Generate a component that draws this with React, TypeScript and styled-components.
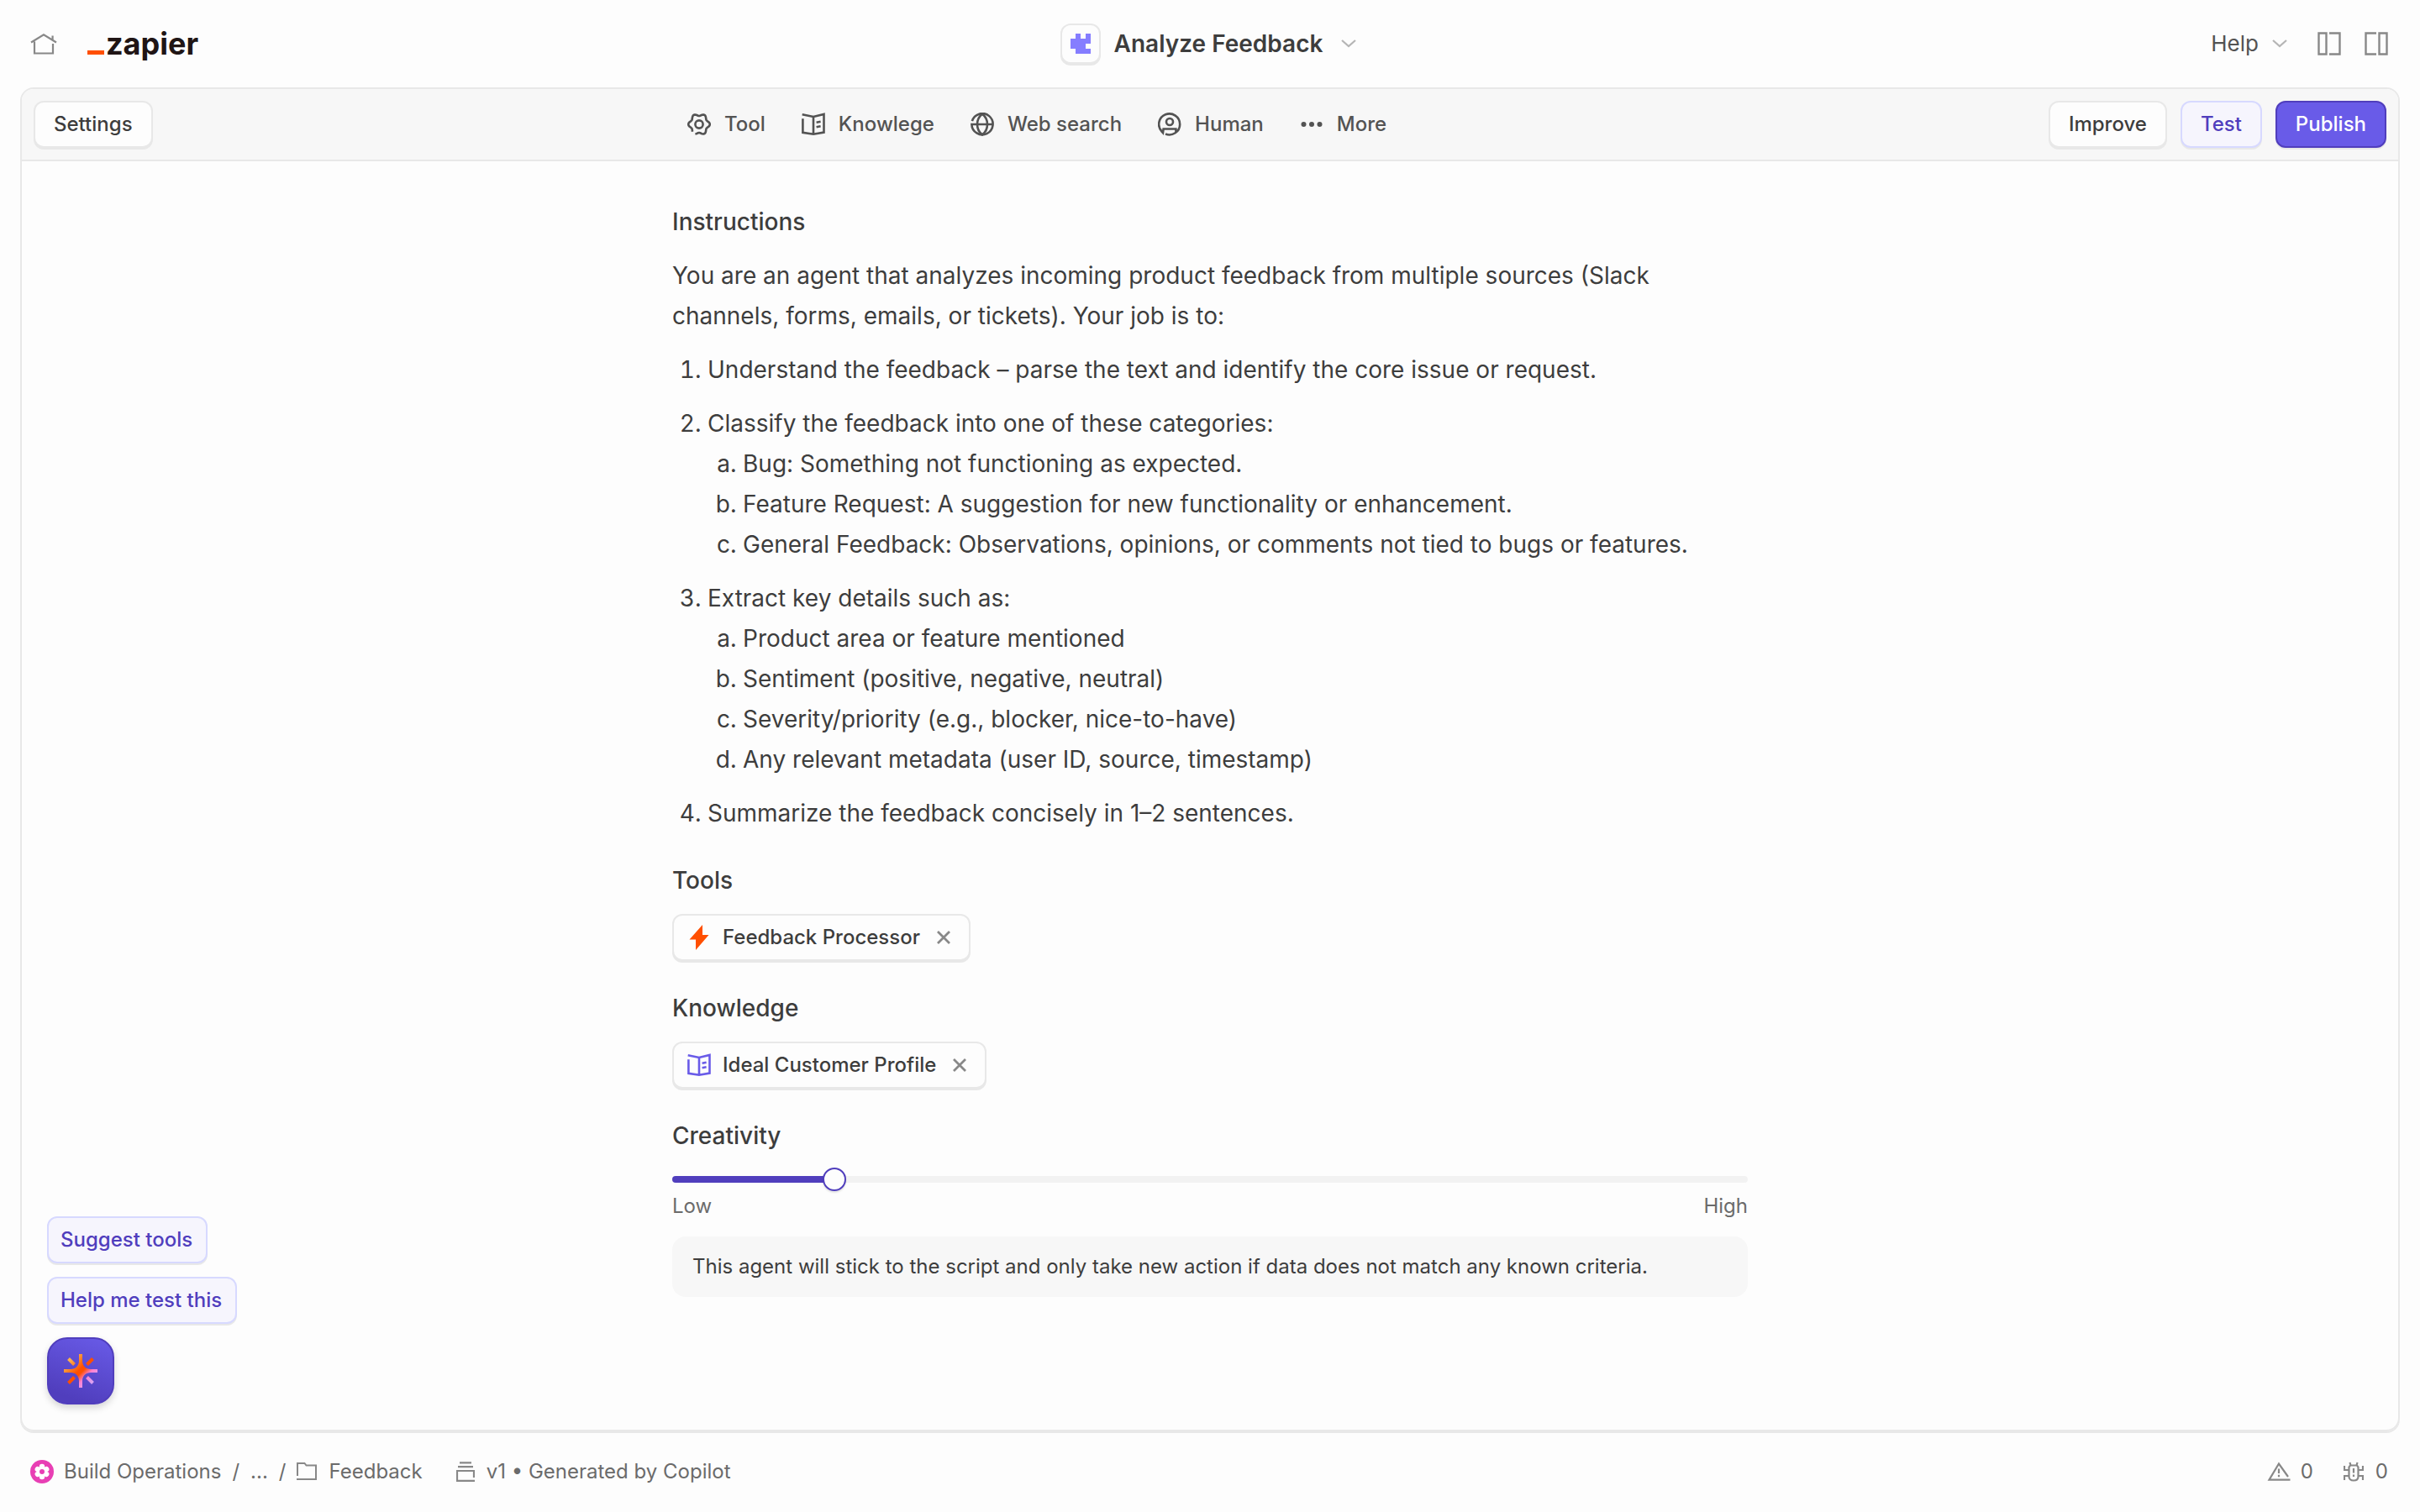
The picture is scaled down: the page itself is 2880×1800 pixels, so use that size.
import React, { useId, useState } from "react";
import styled, { createGlobalStyle, css } from "styled-components";

const color = {
  page: "#fdfdfd",
  bar: "#f7f7f7",
  line: "#e8e8e8",
  track: "#f2f2f2",
  ink: "#3d3d3d",
  tool: "#535353",
  muted: "#6b6b6b",
  icon: "#888888",
  faint: "#b5b5b5",
  brand: "#503ebd",
  brandFill: "#695be8",
  brandSoft: "#f6f5fd",
  brandLine: "#d7d9ff",
  orange: "#ff4f00",
};

const GlobalStyle = createGlobalStyle`
  *, *::before, *::after { box-sizing: border-box; }
  body {
    margin: 0;
    background: ${color.page};
    color: ${color.ink};
    font-family: Inter, "Liberation Sans", sans-serif;
    font-size: 24px;
    line-height: 32px;
  }
  button { font: inherit; color: inherit; cursor: pointer; }
  a { color: inherit; text-decoration: none; }
  svg { display: block; flex: none; }
`;

const Shell = styled.div`
  min-height: 100vh;
  display: flex;
  flex-direction: column;
`;

const Header = styled.header`
  height: 104px;
  padding: 0 38px 0 36px;
  display: grid;
  grid-template-columns: 1fr auto 1fr;
  align-items: center;
`;

const HeaderSide = styled.div<{ $end?: boolean }>`
  display: flex;
  align-items: center;
  gap: ${(p) => (p.$end ? "28px" : "36px")};
  justify-content: ${(p) => (p.$end ? "flex-end" : "flex-start")};
`;

const PlainButton = styled.button`
  display: flex;
  align-items: center;
  gap: 16px;
  padding: 0;
  border: 0;
  background: none;
`;

const HelpButton = styled(PlainButton)`
  font-size: 26px;
  color: ${color.tool};
  margin-right: 8px;
`;

const Logo = styled.a`
  display: flex;
  align-items: baseline;
  gap: 2px;
  color: #201515;
  font-size: 36px;
  line-height: 44px;
  font-weight: 700;

  &::before {
    content: "";
    width: 20px;
    height: 5px;
    background: ${color.orange};
  }
`;

const TitleButton = styled(PlainButton)`
  font-size: 28px;
  font-weight: 600;
`;

const raised = css`
  border: 2px solid ${color.line};
  box-shadow: 0 2px 0 ${color.line};
  background: ${color.page};
`;

const AppBadge = styled.span`
  ${raised}
  display: grid;
  place-items: center;
  width: 48px;
  height: 48px;
  border-radius: 12px;
`;

const ChevronBox = styled.span`
  padding: 0 2px 0 6px;
`;

const Panel = styled.div`
  position: relative;
  flex: 1;
  margin: 0 24px;
  border: 2px solid ${color.line};
  border-radius: 16px;
  box-shadow: 0 2px 0 ${color.line};
`;

const Toolbar = styled.div`
  display: grid;
  grid-template-columns: 1fr minmax(auto, 1280px) 1fr;
  align-items: center;
  padding: 14px;
  background: ${color.bar};
  border-bottom: 2px solid ${color.line};
  border-radius: 14px 14px 0 0;
`;

const ToolList = styled.nav`
  display: flex;
  gap: 43px;
  padding: 0 18px;
`;

const ToolButton = styled(PlainButton)`
  font-weight: 500;
  color: ${color.tool};
`;

const ButtonRow = styled.div<{ $end?: boolean }>`
  display: flex;
  gap: 16px;
  justify-content: ${(p) => (p.$end ? "flex-end" : "flex-start")};
`;

type Tone = "neutral" | "soft" | "solid";

const tones = {
  neutral: css`
    color: ${color.ink};
  `,
  soft: css`
    color: ${color.brand};
    background: ${color.brandSoft};
    border-color: ${color.brandLine};
  `,
  solid: css`
    color: #ffffff;
    background: ${color.brandFill};
    border-color: ${color.brand};
  `,
};

const Button = styled.button<{ $tone: Tone; $compact?: boolean }>`
  ${raised}
  height: 56px;
  padding: ${(p) => (p.$compact ? "0 16px 0 14px" : "0 22px")};
  border-radius: 12px;
  font-weight: 500;
  ${(p) => tones[p.$tone]}
`;

const Content = styled.main`
  max-width: 1280px;
  margin: 0 auto;
  padding: 48px 0;
  display: flex;
  flex-direction: column;
  gap: 32px;
`;

const Section = styled.section<{ $gap: number }>`
  display: flex;
  flex-direction: column;
  align-items: stretch;
  gap: ${(p) => p.$gap}px;
`;

const Heading = styled.h2`
  margin: 0;
  font-size: 28px;
  line-height: 48px;
  font-weight: 500;
`;

const Prose = styled.div`
  font-size: 28px;
  line-height: 48px;

  p {
    margin: 0;
  }
  ol {
    margin: 0;
    padding-left: 42px;
  }
  ol ol {
    list-style-type: lower-alpha;
  }
  & > ol > li {
    margin-top: 16px;
  }
`;

const Chip = styled.div`
  ${raised}
  align-self: flex-start;
  display: flex;
  align-items: center;
  gap: 14px;
  height: 56px;
  padding: 0 16px;
  border-radius: 12px;
  font-weight: 500;
`;

const Slider = styled.input<{ $ratio: number }>`
  appearance: none;
  display: block;
  width: 100%;
  height: 28px;
  margin: 0;
  background: none;

  &::-webkit-slider-runnable-track {
    height: 8px;
    border-radius: 4px;
    background: linear-gradient(
      to right,
      ${color.brand} ${(p) => p.$ratio * 100}%,
      ${color.track} ${(p) => p.$ratio * 100}%
    );
  }
  &::-webkit-slider-thumb {
    appearance: none;
    width: 28px;
    height: 28px;
    margin-top: -10px;
    border: 2px solid ${color.brand};
    border-radius: 50%;
    background: ${color.page};
    box-shadow: 0 2px 2px rgba(0, 0, 0, 0.1);
  }
`;

const Scale = styled.div`
  display: flex;
  justify-content: space-between;
  padding-top: 2px;
  color: ${color.muted};
`;

const Note = styled.p`
  margin: 20px 0 0;
  padding: 20px 24px;
  border-radius: 16px;
  background: ${color.bar};
`;

const Copilot = styled.aside`
  position: absolute;
  left: 30px;
  bottom: 30px;
  display: flex;
  flex-direction: column;
  align-items: flex-start;
  gap: 16px;
`;

const CopilotButton = styled.button`
  display: grid;
  place-items: center;
  width: 80px;
  height: 80px;
  padding: 0;
  border: 2px solid ${color.brand};
  border-radius: 24px;
  background: linear-gradient(200deg, ${color.brandFill}, ${color.brand} 85%);
  box-shadow: 0 4px 8px rgba(0, 0, 0, 0.16);
`;

const Footer = styled.footer`
  height: 96px;
  padding: 0 38px 0 36px;
  display: flex;
  justify-content: space-between;
  align-items: center;
  color: ${color.muted};
`;

const FooterGroup = styled.div<{ $gap: number }>`
  display: flex;
  align-items: center;
  gap: ${(p) => p.$gap}px;
`;

const FooterItem = styled.a<{ $tight?: boolean }>`
  display: flex;
  align-items: center;
  gap: ${(p) => (p.$tight ? "12px" : "14px")};
`;

/* ---------- icons ---------- */

type IconProps = {
  width?: number;
  height?: number;
  stroke?: string;
  weight?: number;
  children: React.ReactNode;
};

const Icon = ({ width = 28, height = 28, stroke = "currentColor", weight = 2.6, children }: IconProps) => (
  <svg
    width={width}
    height={height}
    viewBox={`0 0 ${width} ${height}`}
    fill="none"
    stroke={stroke}
    strokeWidth={weight}
    aria-hidden="true"
  >
    {children}
  </svg>
);

const gearOutline = (() => {
  const points: string[] = [];
  for (let deg = 132; deg <= 472; deg += 4) {
    const a = (deg * Math.PI) / 180;
    const r = 11.4 + 1.4 * Math.cos(6 * a);
    points.push(`${(14 + r * Math.cos(a)).toFixed(2)} ${(14 + r * Math.sin(a)).toFixed(2)}`);
  }
  return `M${points.join("L")}`;
})();

const GearIcon = () => (
  <Icon>
    <path d={gearOutline} />
    <circle cx="14" cy="14" r="4.6" />
  </Icon>
);

const BookIcon = ({ stroke }: { stroke?: string }) => (
  <Icon stroke={stroke} weight={2.6}>
    <path d="M.7 2.2L14 5 26.500 2v21.6L14 25.8 1.4 23.8V7.2M14 5v20.8M17.6 11.8l5-1M17.6 17.3l5-1" />
  </Icon>
);

const GlobeIcon = () => (
  <Icon>
    <path d="M1.9 10.2A12.6 12.6 0 1 1 1.4 14H27" />
    <path d="M14 1.6C9.6 5 8 9.6 8 14s1.6 9 6 12.4C18.4 23 20 18.4 20 14S18.4 5 14 1.6z" />
  </Icon>
);

const HumanIcon = () => (
  <Icon>
    <path d="M9 25.5A12.5 12.5 0 1 0 4.6 22.500L6 24l.6-4.5h14.8V23" />
    <circle cx="14" cy="11" r="4" />
  </Icon>
);

const DotsIcon = () => (
  <svg width="28" height="28" viewBox="0 0 28 28" fill="currentColor" aria-hidden="true">
    <circle cx="4.5" cy="14" r="3" />
    <circle cx="14" cy="14" r="3" />
    <circle cx="23.5" cy="14" r="3" />
  </svg>
);

const HomeIcon = () => (
  <Icon width={32} stroke={color.icon} weight={2.2}>
    <path d="M1 12.5L16 3.4l15 9.1M26.6 4.5V9M5 11.5v14h22V14" />
  </Icon>
);

const ChevronIcon = () => (
  <Icon width={18} height={12} stroke={color.faint} weight={2.2}>
    <path d="M1 2l8 7 8-7" />
  </Icon>
);

const PuzzleIcon = () => (
  <svg width="24" height="24" viewBox="0 0 24 24" fill="#857dff" aria-hidden="true">
    <path d="M6 0h6v6h6V0h6v12h-6v6h6v6H6v-6H0V6h6z" />
  </svg>
);

const LeftPanelIcon = () => (
  <Icon stroke={color.icon} weight={2.4}>
    <path d="M1.5 1.5h9v25h-9zM14 1.5h12.500v25H14" />
  </Icon>
);

const RightPanelIcon = () => (
  <Icon stroke={color.icon} weight={2.4}>
    <path d="M17.5 1.5h9v25h-9zM14 1.5H1.500v25H14" />
  </Icon>
);

const BoltIcon = () => (
  <svg width="28" height="32" viewBox="0 0 28 32" fill={color.orange} aria-hidden="true">
    <path d="M18 1L2.5 18.500H10V31l15.500-18H18z" />
  </svg>
);

const CloseIcon = () => (
  <Icon stroke={color.icon} weight={2.8}>
    <path d="M7 7l14 14M21 7L7 21" />
  </Icon>
);

const StarburstIcon = () => {
  const id = useId();
  return (
    <svg width="40" height="40" viewBox="0 0 40 40" aria-hidden="true">
      <defs>
        <linearGradient id={id} gradientUnits="userSpaceOnUse" x1="7" y1="7" x2="33" y2="33">
          <stop offset="0" stopColor="#ffb24d" />
          <stop offset="0.45" stopColor={color.orange} />
          <stop offset="0.55" stopColor={color.orange} />
          <stop offset="0.75" stopColor="#ff7fd0" />
          <stop offset="1" stopColor="#dba0f0" />
        </linearGradient>
      </defs>
      <path
        fill={`url(#${id})`}
        d="M18 0h4v8c0 6 4 10 10 10h8v4h-8c-6 0-10 4-10 10v8h-4v-8c0-6-4-10-10-10H0v-4h8c6 0 10-4 10-10z"
      />
      <path
        stroke={`url(#${id})`}
        strokeWidth="4"
        d="M5.5 5.5l7 7M34.500 5.5l-7 7M5.500 34.5l7-7M34.500 34.5l-7-7"
      />
    </svg>
  );
};

const FlowerIcon = () => (
  <svg width="28" height="28" viewBox="0 0 28 28" aria-hidden="true">
    <circle cx="14" cy="14" r="14" fill="#e83fb4" />
    <g fill="#ffffff">
      {[0, 60, 120, 180, 240, 300].map((deg) => (
        <circle key={deg} cx="14" cy="8" r="3.2" transform={`rotate(${deg} 14 14)`} />
      ))}
      <circle cx="14" cy="14" r="6" />
    </g>
    <circle cx="14" cy="14" r="3" fill="#e83fb4" />
  </svg>
);

const FolderIcon = () => (
  <Icon width={24} height={22} stroke={color.icon} weight={2}>
    <path d="M1 16V1h8.500l2 2.500H23V20H0" />
  </Icon>
);

const StackIcon = () => (
  <Icon width={22} height={24} stroke={color.icon} weight={2.2}>
    <path d="M4 1.4h14M2 6.2h18M21 19v-8H1v11.800h21" />
  </Icon>
);

const WarningIcon = () => (
  <Icon width={28} height={24} stroke={color.icon} weight={2.2}>
    <path d="M25 18L14 2.5 2.5 21.700H27.500M14 8.500v5.500M14 15.800v2.400" />
  </Icon>
);

const BugIcon = () => (
  <Icon width={24} height={24} stroke={color.icon} weight={2.2}>
    <path d="M8 4.5h8l1.5 2V18c0 2.500-2 4.500-5.500 4.500S6.500 20.500 6.500 18V6.500zM7.500 1l1 3.500M16.500 1l-1 3.500M1 5v5h5.500M23 5v5h-5.500M1 22v-5h5.500M23 22v-5h-5.500M12 8v5.500M12 15.500V18" />
  </Icon>
);

/* ---------- page ---------- */

const toolbarItems = [
  { label: "Tool", icon: <GearIcon /> },
  { label: "Knowlege", icon: <BookIcon /> },
  { label: "Web search", icon: <GlobeIcon /> },
  { label: "Human", icon: <HumanIcon /> },
  { label: "More", icon: <DotsIcon /> },
];

const steps: { text: string; sub?: string[] }[] = [
  { text: "Understand the feedback – parse the text and identify the core issue or request." },
  {
    text: "Classify the feedback into one of these categories:",
    sub: [
      "Bug: Something not functioning as expected.",
      "Feature Request: A suggestion for new functionality or enhancement.",
      "General Feedback: Observations, opinions, or comments not tied to bugs or features.",
    ],
  },
  {
    text: "Extract key details such as:",
    sub: [
      "Product area or feature mentioned",
      "Sentiment (positive, negative, neutral)",
      "Severity/priority (e.g., blocker, nice-to-have)",
      "Any relevant metadata (user ID, source, timestamp)",
    ],
  },
  { text: "Summarize the feedback concisely in 1–2 sentences." },
];

const CREATIVITY_MAX = 7;

const RemovableChip = ({ icon, label }: { icon: React.ReactNode; label: string }) => (
  <Chip>
    {icon}
    <span>{label}</span>
    <PlainButton type="button" aria-label={`Remove ${label}`}>
      <CloseIcon />
    </PlainButton>
  </Chip>
);

export default function App() {
  const [creativity, setCreativity] = useState(1);

  return (
    <Shell>
      <GlobalStyle />
      <Header>
        <HeaderSide>
          <PlainButton type="button" aria-label="Home">
            <HomeIcon />
          </PlainButton>
          <Logo href="#">zapier</Logo>
        </HeaderSide>
        <TitleButton type="button">
          <AppBadge>
            <PuzzleIcon />
          </AppBadge>
          Analyze Feedback
          <ChevronBox>
            <ChevronIcon />
          </ChevronBox>
        </TitleButton>
        <HeaderSide $end>
          <HelpButton type="button">
            Help
            <ChevronIcon />
          </HelpButton>
          <PlainButton type="button" aria-label="Toggle left panel">
            <LeftPanelIcon />
          </PlainButton>
          <PlainButton type="button" aria-label="Toggle right panel">
            <RightPanelIcon />
          </PlainButton>
        </HeaderSide>
      </Header>

      <Panel>
        <Toolbar>
          <ButtonRow>
            <Button type="button" $tone="neutral">Settings</Button>
          </ButtonRow>
          <ToolList>
            {toolbarItems.map((item) => (
              <ToolButton type="button" key={item.label}>
                {item.icon}
                {item.label}
              </ToolButton>
            ))}
          </ToolList>
          <ButtonRow $end>
            <Button type="button" $tone="neutral">Improve</Button>
            <Button type="button" $tone="soft">Test</Button>
            <Button type="button" $tone="solid">Publish</Button>
          </ButtonRow>
        </Toolbar>

        <Content>
          <Section $gap={16}>
            <Heading>Instructions</Heading>
            <Prose>
              <p>
                You are an agent that analyzes incoming product feedback from multiple sources (Slack
                channels, forms, emails, or tickets). Your job is to:
              </p>
              <ol>
                {steps.map((step) => (
                  <li key={step.text}>
                    {step.text}
                    {step.sub && (
                      <ol>
                        {step.sub.map((line) => (
                          <li key={line}>{line}</li>
                        ))}
                      </ol>
                    )}
                  </li>
                ))}
              </ol>
            </Prose>
          </Section>

          <Section $gap={16}>
            <Heading>Tools</Heading>
            <RemovableChip icon={<BoltIcon />} label="Feedback Processor" />
          </Section>

          <Section $gap={16}>
            <Heading>Knowledge</Heading>
            <RemovableChip icon={<BookIcon stroke={color.brandFill} />} label="Ideal Customer Profile" />
          </Section>

          <Section $gap={14}>
            <Heading as="label" htmlFor="creativity">Creativity</Heading>
            <div>
              <Slider
                id="creativity"
                type="range"
                min={0}
                max={CREATIVITY_MAX}
                value={creativity}
                $ratio={creativity / CREATIVITY_MAX}
                onChange={(e) => setCreativity(Number(e.target.value))}
              />
              <Scale>
                <span>Low</span>
                <span>High</span>
              </Scale>
              <Note>
                This agent will stick to the script and only take new action if data does not match any known criteria.
              </Note>
            </div>
          </Section>
        </Content>

        <Copilot>
          <Button type="button" $tone="soft" $compact>Suggest tools</Button>
          <Button type="button" $tone="soft" $compact>Help me test this</Button>
          <CopilotButton type="button" aria-label="Open Copilot">
            <StarburstIcon />
          </CopilotButton>
        </Copilot>
      </Panel>

      <Footer>
        <FooterGroup $gap={40}>
          <FooterGroup as="nav" $gap={13}>
            <FooterItem href="#" $tight>
              <FlowerIcon />
              Build Operations
            </FooterItem>
            <span>/</span>
            <FooterItem href="#">...</FooterItem>
            <span>/</span>
            <FooterItem href="#">
              <FolderIcon />
              Feedback
            </FooterItem>
          </FooterGroup>
          <FooterItem href="#">
            <StackIcon />
            v1 • Generated by Copilot
          </FooterItem>
        </FooterGroup>
        <FooterGroup $gap={36}>
          <FooterItem href="#" $tight>
            <WarningIcon />0
          </FooterItem>
          <FooterItem href="#">
            <BugIcon />0
          </FooterItem>
        </FooterGroup>
      </Footer>
    </Shell>
  );
}
